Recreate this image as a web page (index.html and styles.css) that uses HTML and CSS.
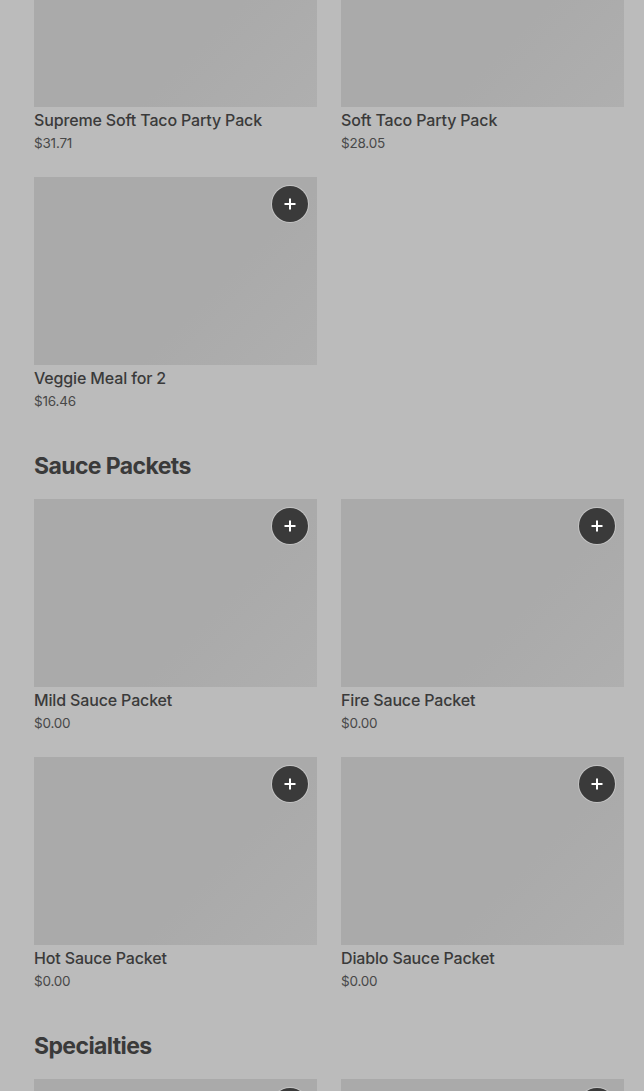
FILE: index.html
```html
<!DOCTYPE html>
<html>
<head>
    <meta charset="utf-8">
    <title>Menu</title>
    <link rel="stylesheet" href="styles.css">
</head>
<body>
    <div class="menu">
        <section class="section first">
            <div class="grid">
                <div class="item">
                    <div class="thumb"></div>
                    <div class="name">Supreme Soft Taco Party Pack</div>
                    <div class="price">$31.71</div>
                </div>
                <div class="item">
                    <div class="thumb"></div>
                    <div class="name">Soft Taco Party Pack</div>
                    <div class="price">$28.05</div>
                </div>
                <div class="item">
                    <div class="thumb"><span class="add"><svg width="14" height="14" viewBox="0 0 14 14"><path d="M7 1.5v11M1.5 7h11" stroke="#fff" stroke-width="2"/></svg></span></div>
                    <div class="name">Veggie Meal for 2</div>
                    <div class="price">$16.46</div>
                </div>
            </div>
        </section>

        <section class="section">
            <h2>Sauce Packets</h2>
            <div class="grid">
                <div class="item">
                    <div class="thumb"><span class="add"><svg width="14" height="14" viewBox="0 0 14 14"><path d="M7 1.5v11M1.5 7h11" stroke="#fff" stroke-width="2"/></svg></span></div>
                    <div class="name">Mild Sauce Packet</div>
                    <div class="price">$0.00</div>
                </div>
                <div class="item">
                    <div class="thumb"><span class="add"><svg width="14" height="14" viewBox="0 0 14 14"><path d="M7 1.5v11M1.5 7h11" stroke="#fff" stroke-width="2"/></svg></span></div>
                    <div class="name">Fire Sauce Packet</div>
                    <div class="price">$0.00</div>
                </div>
                <div class="item">
                    <div class="thumb"><span class="add"><svg width="14" height="14" viewBox="0 0 14 14"><path d="M7 1.5v11M1.5 7h11" stroke="#fff" stroke-width="2"/></svg></span></div>
                    <div class="name">Hot Sauce Packet</div>
                    <div class="price">$0.00</div>
                </div>
                <div class="item">
                    <div class="thumb"><span class="add"><svg width="14" height="14" viewBox="0 0 14 14"><path d="M7 1.5v11M1.5 7h11" stroke="#fff" stroke-width="2"/></svg></span></div>
                    <div class="name">Diablo Sauce Packet</div>
                    <div class="price">$0.00</div>
                </div>
            </div>
        </section>

        <section class="section">
            <h2>Specialties</h2>
            <div class="grid">
                <div class="item">
                    <div class="thumb"><span class="add"><svg width="14" height="14" viewBox="0 0 14 14"><path d="M7 1.5v11M1.5 7h11" stroke="#fff" stroke-width="2"/></svg></span></div>
                </div>
                <div class="item">
                    <div class="thumb"><span class="add"><svg width="14" height="14" viewBox="0 0 14 14"><path d="M7 1.5v11M1.5 7h11" stroke="#fff" stroke-width="2"/></svg></span></div>
                </div>
            </div>
        </section>
    </div>
</body>
</html>
```

FILE: styles.css
```css
body {
    margin: 0;
    padding: 0;
    background: #bbbbbb;
    font-family: Inter, "Liberation Sans", sans-serif;
    color: #3a3a3a;
    overflow: hidden;
}

.menu {
    padding: 0 20px 0 34px;
    margin-top: -81px;
}

.section {
    padding-top: 39px;
}

.section.first {
    padding-top: 0;
}

h2 {
    margin: 0 0 17px 0;
    font-size: 23px;
    line-height: 32px;
    font-weight: 700;
    letter-spacing: -0.6px;
    color: #3a3a3a;
}

.grid {
    display: grid;
    grid-template-columns: 1fr 1fr;
    column-gap: 24px;
    row-gap: 24px;
}

.thumb {
    position: relative;
    height: 188px;
    background: linear-gradient(135deg, #aaaaaa 0%, #aaaaaa 62%, #afafaf 100%);
}

.add {
    position: absolute;
    top: 9px;
    right: 9px;
    width: 36px;
    height: 36px;
    border-radius: 50%;
    background: #3a3a3a;
    box-shadow: 0 0 0 1px #c4c4c4;
    display: flex;
    align-items: center;
    justify-content: center;
}

.name {
    margin-top: 2px;
    font-size: 16px;
    line-height: 22px;
    font-weight: 500;
    letter-spacing: -0.15px;
    color: #3a3a3a;
}

.price {
    margin-top: 2px;
    font-size: 13.5px;
    line-height: 20px;
    letter-spacing: -0.2px;
    color: #484848;
}
```
